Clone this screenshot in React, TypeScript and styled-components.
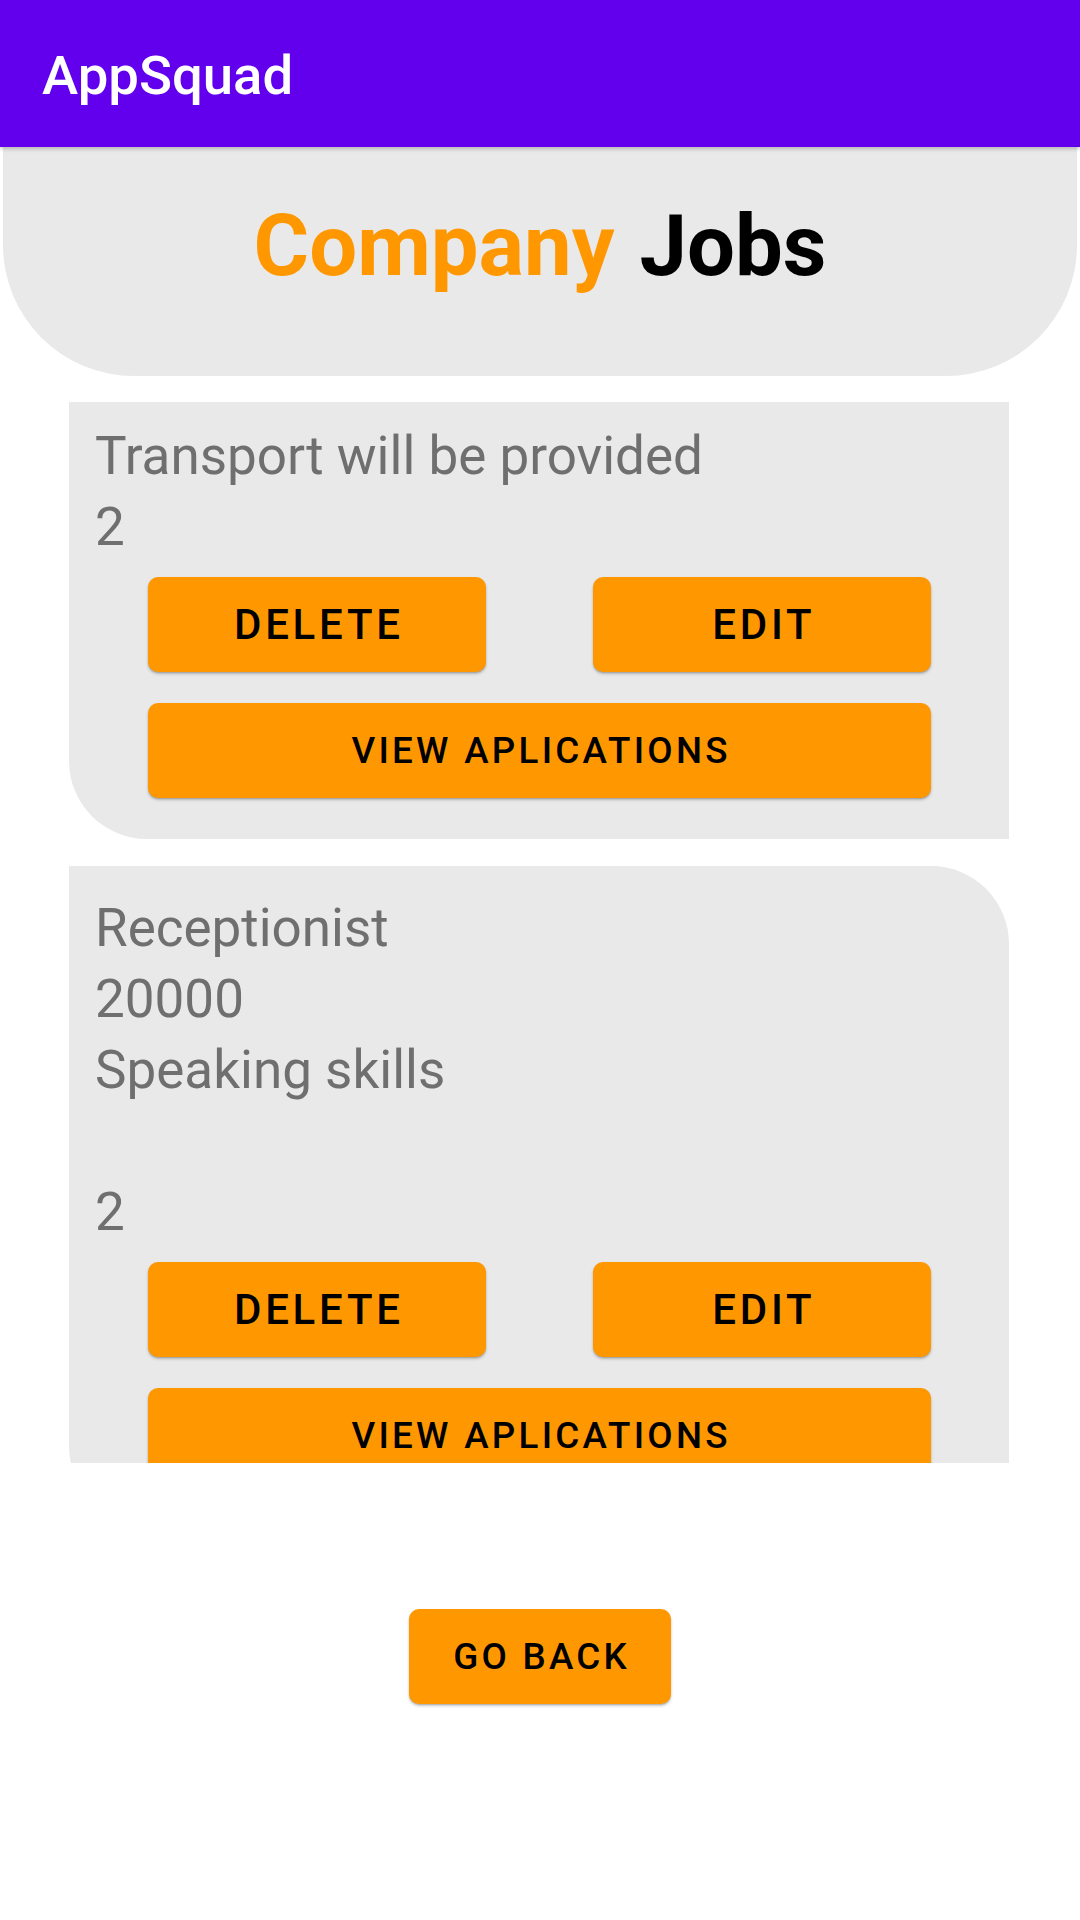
import React from "react";
import styled, { createGlobalStyle } from "styled-components";

const GlobalStyle = createGlobalStyle`
  html, body {
    margin: 0;
    padding: 0;
    background: #ffffff;
    font-family: Roboto, "Noto Sans", "Liberation Sans", sans-serif;
  }
  * { box-sizing: border-box; }
`;

const Screen = styled.div`
  width: 1080px;
  min-height: 1920px;
  background: #ffffff;
  display: flex;
  flex-direction: column;
`;

const Toolbar = styled.header`
  height: 147px;
  background: #6200ee;
  display: flex;
  align-items: center;
  padding: 5px 0 0 42px;
  box-shadow: 0 2px 4px rgba(0, 0, 0, 0.22);
  position: relative;
  z-index: 1;
`;

const ToolbarTitle = styled.h1`
  margin: 0;
  color: #ffffff;
  font-size: 54.5px;
  font-weight: 500;
  line-height: 1.172;
`;

const Header = styled.section`
  margin: 0 3px;
  height: 229px;
  background: #e9e9e9;
  border-radius: 0 0 131px 131px;
  padding-top: 50px;
  display: flex;
  justify-content: center;
`;

const HeaderTitle = styled.h2`
  margin: 0;
  font-size: 85px;
  font-weight: 700;
  line-height: 1.172;
  display: flex;
  gap: 25px;
`;

const Word = styled.span<{ $accent?: boolean }>`
  color: ${(p) => (p.$accent ? "#ff9800" : "#000000")};
`;

const ListViewport = styled.div`
  height: 1087px;
  overflow: hidden;
  padding: 26px 0 0 69px;
  display: flex;
  flex-direction: column;
  gap: 27px;
`;

const Card = styled.article<{ $pt: number; $variant: "first" | "second" }>`
  width: 940px;
  flex-shrink: 0;
  background: #e9e9e9;
  padding: ${(p) => p.$pt}px 0 41px 0;
  border-radius: ${(p) => (p.$variant === "first" ? "0 0 0 78px" : "0 78px 0 78px")};
`;

const InfoLine = styled.div`
  padding-left: 26px;
  font-size: 53px;
  line-height: 71px;
  height: 71px;
  color: #6f6f6f;
  white-space: pre;
`;

const ButtonArea = styled.div<{ $mt: number }>`
  margin-top: ${(p) => p.$mt}px;
  padding: 0 78px 0 79px;
  display: flex;
  flex-direction: column;
  gap: 31px;
`;

const ButtonRow = styled.div`
  display: flex;
  justify-content: space-between;
`;

const OrangeButton = styled.button<{ $big?: boolean; $width?: string }>`
  height: 95px;
  width: ${(p) => p.$width ?? "100%"};
  border: none;
  border-radius: 10px;
  background: #ff9800;
  color: #000000;
  font-family: Roboto, "Noto Sans", "Liberation Sans", sans-serif;
  font-weight: 500;
  font-size: ${(p) => (p.$big ? "42px" : "36.75px")};
  letter-spacing: 0.0892em;
  text-transform: uppercase;
  padding: 0 0 0 0.0892em;
  box-shadow: 0 2px 3px rgba(0, 0, 0, 0.22), 0 1px 1px rgba(0, 0, 0, 0.12);
  display: flex;
  align-items: center;
  justify-content: center;
`;

const Footer = styled.div`
  margin-top: 146px;
  display: flex;
  justify-content: center;
`;

type Job = { lines: string[]; pt: number; mt: number; variant: "first" | "second" };

const jobs: Job[] = [
  { lines: ["Transport will be provided", "2"], pt: 19, mt: 14, variant: "first" },
  { lines: ["Receptionist", "20000", "Speaking skills", "", "2"], pt: 27, mt: 14, variant: "second" },
];

export default function App() {
  return (
    <>
      <GlobalStyle />
      <Screen>
        <Toolbar>
          <ToolbarTitle>AppSquad</ToolbarTitle>
        </Toolbar>
        <Header>
          <HeaderTitle>
            <Word $accent>Company</Word>
            <Word>Jobs</Word>
          </HeaderTitle>
        </Header>
        <ListViewport>
          {jobs.map((job, i) => (
            <Card key={i} $pt={job.pt} $variant={job.variant}>
              {job.lines.map((l, j) => (
                <InfoLine key={j}>{l}</InfoLine>
              ))}
              <ButtonArea $mt={job.mt}>
                <ButtonRow>
                  <OrangeButton $big $width="338px">Delete</OrangeButton>
                  <OrangeButton $big $width="338px">Edit</OrangeButton>
                </ButtonRow>
                <OrangeButton>View aplications</OrangeButton>
              </ButtonArea>
            </Card>
          ))}
        </ListViewport>
        <Footer>
          <OrangeButton $width="262px">Go back</OrangeButton>
        </Footer>
      </Screen>
    </>
  );
}
